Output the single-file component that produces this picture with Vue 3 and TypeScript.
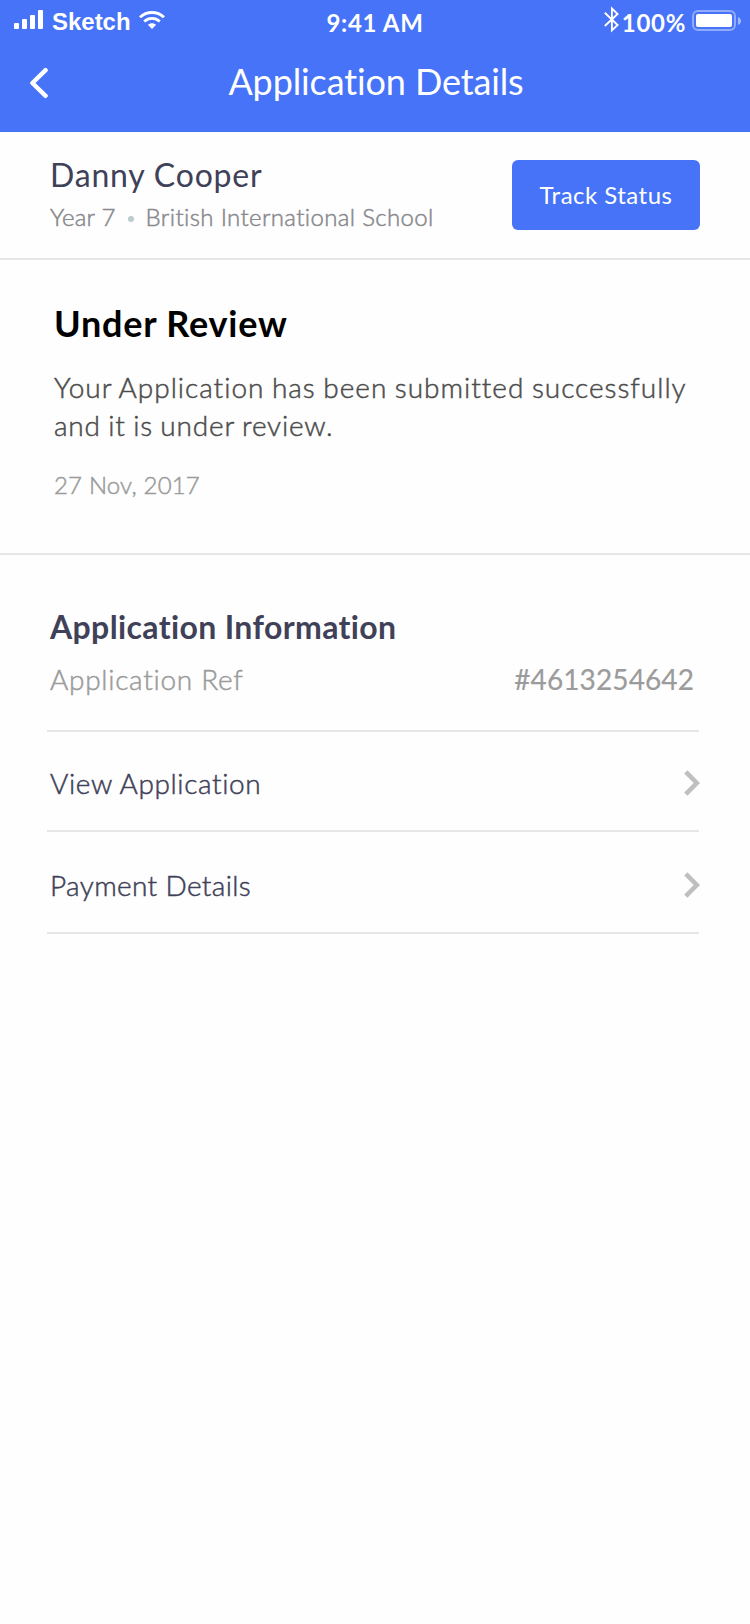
<script setup lang="ts">
interface MenuRow {
  id: string
  label: string
}

const student = { name: 'Danny Cooper', year: 'Year 7', school: 'British International School' }
const rows: MenuRow[] = [
  { id: 'view', label: 'View Application' },
  { id: 'payment', label: 'Payment Details' },
]
</script>

<template>
  <main class="screen">
    <header class="header">
      <div class="status-bar">
        <div class="carrier">
          <svg class="signal" width="30" height="20" viewBox="0 0 30 20" fill="#fff">
            <rect x="0" y="13" width="5" height="6" rx="1" />
            <rect x="8" y="9" width="5" height="10" rx="1" />
            <rect x="16" y="5" width="5" height="14" rx="1" />
            <rect x="24" y="0" width="5" height="19" rx="1" />
          </svg>
          <span class="carrier-name">Sketch</span>
          <svg class="wifi" width="26" height="18" viewBox="0 0 26 18" fill="none" stroke="#fff">
            <path d="M1 6.3C7.8 -0.1 18.2 -0.1 25 6.3" stroke-width="2.9" />
            <path d="M5.2 10.4C9.6 6.3 16.4 6.3 20.8 10.4" stroke-width="2.8" />
            <path d="M8.9 13.8C11.2 11.6 14.8 11.6 17.1 13.8L13 17.9Z" fill="#fff" stroke="none" />
          </svg>
        </div>
        <span class="time">9:41 AM</span>
        <div class="power">
          <svg class="bluetooth" width="16" height="27" viewBox="0 0 16 27" fill="none" stroke="#fff" stroke-width="1.9">
            <path d="M0.8 6.8L13.6 19L7.9 24.4V2.5L13.6 8L0.8 20" />
          </svg>
          <span class="percent">100%</span>
          <svg class="battery" width="50" height="21" viewBox="0 0 50 21">
            <rect x="1" y="1" width="42" height="19" rx="5" fill="none" stroke="#fff" stroke-opacity="0.4" stroke-width="2" />
            <rect x="4" y="4" width="36" height="13" rx="2" fill="#fff" />
            <path d="M46 7C50 8.5 50 13.5 46 15Z" fill="#fff" fill-opacity="0.5" />
          </svg>
        </div>
      </div>
      <nav class="nav">
        <svg class="back" width="20" height="32" viewBox="0 0 20 32" fill="none" stroke="#fff" stroke-width="4.4" stroke-linecap="round" stroke-linejoin="round">
          <path d="M17.6 3.2L4.4 16L17.6 28.8" />
        </svg>
        <h1 class="title">Application Details</h1>
      </nav>
    </header>

    <section class="profile">
      <div>
        <h2 class="name">{{ student.name }}</h2>
        <p class="meta">
          <span class="year">{{ student.year }}</span>
          <i class="dot"></i>
          <span class="school">{{ student.school }}</span>
        </p>
      </div>
      <button class="track">Track Status</button>
    </section>

    <section class="review">
      <h2 class="review-title">Under Review</h2>
      <p class="review-text">
        <span class="lead">Your Application has been submitted successfully</span><br />
        <span>and it is under review.</span>
      </p>
      <p class="date">27 Nov, 2017</p>
    </section>

    <section class="info">
      <h2 class="info-title">Application Information</h2>
      <div class="ref">
        <span class="ref-label">Application Ref</span>
        <span class="ref-value">#4613254642</span>
      </div>
      <a v-for="row in rows" :key="row.id" class="row" :class="row.id">
        <span>{{ row.label }}</span>
        <svg width="16" height="26" viewBox="0 0 16 26" fill="none" stroke="#bfbfbf" stroke-width="4.6">
          <path d="M1.8 1.8L12.8 13L1.8 24.2" />
        </svg>
      </a>
    </section>
  </main>
</template>

<style>
body {
  margin: 0;
  background: #fefefe;
}
</style>

<style scoped>
.screen {
  width: 750px;
  height: 1624px;
  background: #fefefe;
  font-family: Lato, "Liberation Sans", sans-serif;
  font-variant-ligatures: none;
  overflow: hidden;
}
h1, h2, p {
  margin: 0;
}
svg {
  display: block;
  flex: none;
}
.header {
  height: 132px;
  background: #4673f7;
  color: #fff;
}
.status-bar {
  display: grid;
  grid-template-columns: 1fr auto 1fr;
  height: 44px;
  font-size: 24px;
  line-height: 44px;
}
.carrier, .power {
  display: flex;
}
.signal {
  margin: 10px 8px 0 14px;
}
.carrier-name {
  font-family: "Liberation Sans", Arial, sans-serif;
  font-weight: 700;
  letter-spacing: -0.02px;
}
.wifi {
  margin: 11px 0 0 8px;
}
.time {
  padding-top: 1px;
  font-weight: 700;
  letter-spacing: 0.7px;
}
.power {
  justify-content: flex-end;
}
.bluetooth {
  margin: 6px 2px 0 0;
}
.percent {
  padding-top: 1px;
  font-weight: 700;
  letter-spacing: 0.7px;
}
.battery {
  margin: 10px 8px 0 6px;
}
.nav {
  display: grid;
  grid-template-columns: 100px 1fr 100px;
}
.back {
  margin: 23px 0 0 28px;
}
.title {
  padding: 1px 0 0 2px;
  font-size: 36px;
  line-height: 72px;
  font-weight: 400;
  letter-spacing: -0.12px;
  text-align: center;
}
.profile {
  display: flex;
  justify-content: space-between;
  height: 126px;
  padding: 0 50px;
  border-bottom: 2px solid #e6e6e6;
}
.name {
  padding-top: 21px;
  font-size: 32px;
  line-height: 43px;
  font-weight: 400;
  letter-spacing: 0.8px;
  color: #3f4158;
}
.meta {
  display: flex;
  align-items: center;
  margin-top: -1px;
  font-size: 24px;
  line-height: 43px;
  font-weight: 300;
  color: #88898e;
  -webkit-text-stroke: 0.5px #88898e;
}
.year {
  letter-spacing: 0.22px;
}
.dot {
  width: 6px;
  height: 6px;
  margin: 4px 12px 0 12px;
  border-radius: 50%;
  background: #bccbcc;
}
.school {
  letter-spacing: 0.36px;
}
.track {
  width: 188px;
  height: 70px;
  margin-top: 28px;
  padding: 0 0 2px 0;
  border: 0;
  border-radius: 6px;
  background: #4673f7;
  color: #fff;
  font: 400 24px Lato, "Liberation Sans", sans-serif;
  letter-spacing: 0.48px;
}
.review {
  height: 252px;
  padding: 41px 50px 0 54px;
  border-bottom: 2px solid #e6e6e6;
}
.review-title {
  font-size: 36px;
  line-height: 44px;
  font-weight: 700;
  letter-spacing: 0.78px;
  color: #000;
}
.review-text {
  margin-top: 23px;
  font-size: 28px;
  line-height: 38px;
  font-weight: 300;
  letter-spacing: 0.82px;
  word-spacing: -1px;
  white-space: nowrap;
  color: #4c4c4c;
  -webkit-text-stroke: 0.5px #4c4c4c;
}
.lead {
  letter-spacing: 0.98px;
}
.date {
  margin-top: 22px;
  font-size: 24px;
  line-height: 38px;
  font-weight: 300;
  letter-spacing: 0.18px;
  color: #9b9b9b;
  -webkit-text-stroke: 0.5px #9b9b9b;
}
.info {
  padding: 50px 51px 0 47px;
}
.info-title {
  padding-left: 3px;
  font-size: 32px;
  line-height: 44px;
  font-weight: 700;
  letter-spacing: 0.37px;
  color: #3f4158;
}
.ref {
  display: flex;
  justify-content: space-between;
  margin-top: 10px;
  padding: 0 5px 31px 3px;
  border-bottom: 2px solid #e6e6e6;
  font-size: 28px;
  line-height: 40px;
  color: #9b9b9b;
}
.ref-label {
  font-weight: 300;
  letter-spacing: 0.72px;
  -webkit-text-stroke: 0.5px #9b9b9b;
}
.ref-value {
  font-weight: 400;
  letter-spacing: 0.1px;
  -webkit-text-stroke: 0.2px #9b9b9b;
}
.row {
  display: flex;
  align-items: center;
  justify-content: space-between;
  height: 40px;
  margin-right: -1px;
  padding: 31px 0 27px 3px;
  background: linear-gradient(#e6e6e6, #e6e6e6) 0 100% / calc(100% - 1px) 2px no-repeat;
  font-size: 28px;
  line-height: 40px;
  font-weight: 300;
  letter-spacing: 0.6px;
  color: #3f4158;
  -webkit-text-stroke: 0.5px #3f4158;
}
.view {
  padding-bottom: 29px;
}
.payment {
  padding-top: 33px;
  padding-bottom: 29px;
  letter-spacing: 0.36px;
}
</style>
